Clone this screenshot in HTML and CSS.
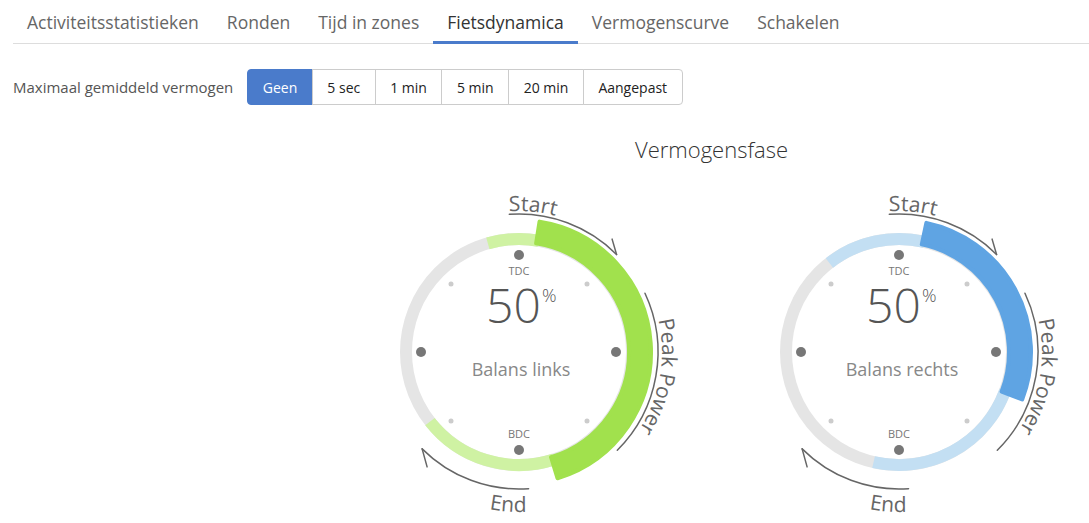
FILE: index.html
```html
<!DOCTYPE html>
<html lang="nl">
<head>
<meta charset="utf-8">
<title>Fietsdynamica</title>
<link rel="stylesheet" href="styles.css">
</head>
<body>
<nav class="tabs">
  <a class="tab">Activiteitsstatistieken</a>
  <a class="tab">Ronden</a>
  <a class="tab">Tijd in zones</a>
  <a class="tab active">Fietsdynamica</a>
  <a class="tab">Vermogenscurve</a>
  <a class="tab">Schakelen</a>
</nav>

<div class="filter">
  <span class="filter-label">Maximaal gemiddeld vermogen</span>
  <div class="btn-group">
    <button class="btn active">Geen</button>
    <button class="btn">5 sec</button>
    <button class="btn">1 min</button>
    <button class="btn">5 min</button>
    <button class="btn">20 min</button>
    <button class="btn">Aangepast</button>
  </div>
</div>

<section class="phase">
  <h2 class="phase-title">Vermogensfase</h2>
  <div class="gauges">
    <svg class="gauge" viewBox="0 0 380 360" width="380" height="360">
      <defs>
        <path id="startL" d="M 100.31 68.20 A 141 141 0 0 1 298.80 87.31"/>
        <path id="peakL" d="M 307.14 94.98 A 143 143 0 0 1 272.02 294.14"/>
        <path id="endL" d="M 69.25 281.98 A 160 160 0 0 0 294.98 297.75"/>
      </defs>
      <circle class="ring-base" cx="190" cy="177" r="113"/>
      <path class="ring-light green-light" d="M 158.85 68.38 A 113 113 0 0 1 209.62 65.72"/>
      <path class="ring-light green-light" d="M 224.92 284.47 A 113 113 0 0 1 100.96 246.57"/>
      <path class="ring-main green" d="M 210.54 46.61 A 132 132 0 0 1 228.48 303.27 L 222.07 282.23 A 110 110 0 0 0 207.12 68.34 Z"/>

      <circle class="dot" cx="190" cy="80" r="5"/>
      <circle class="dot" cx="190" cy="275" r="5"/>
      <circle class="dot" cx="92" cy="177" r="5"/>
      <circle class="dot" cx="287" cy="177" r="5"/>
      <circle class="dot-small" cx="122" cy="109" r="2.5"/>
      <circle class="dot-small" cx="258" cy="109" r="2.5"/>
      <circle class="dot-small" cx="122" cy="246" r="2.5"/>
      <circle class="dot-small" cx="258" cy="246" r="2.5"/>

      <text class="g-label" x="190" y="100">TDC</text>
      <text class="g-label" x="190" y="263">BDC</text>
      <text class="g-num" x="184.5" y="148">50</text>
      <text class="g-pct" x="213" y="127">%</text>
      <text class="g-name" x="192" y="201">Balans links</text>

      <path class="ann-line" d="M 180.37 39.33 A 138 138 0 0 1 287.58 79.42"/>
      <path class="ann-line" d="M 283.1 64.1 L 287.58 79.42"/>
      <path class="ann-line" d="M 315.98 118.26 A 139 139 0 0 1 288.29 275.29"/>
      <path class="ann-line" d="M 199.56 313.67 A 137 137 0 0 1 93.13 273.87"/>
      <path class="ann-line" d="M 93.13 273.87 L 98.1 291.9"/>
      <text class="ann-text"><textPath href="#startL" startOffset="50%">Start</textPath></text>
      <text class="ann-text"><textPath href="#peakL" startOffset="50%">Peak Power</textPath></text>
      <text class="ann-text"><textPath href="#endL" startOffset="50%">End</textPath></text>
    </svg>

    <svg class="gauge" viewBox="0 0 380 360" width="380" height="360">
      <defs>
        <path id="startR" d="M 100.31 68.20 A 141 141 0 0 1 298.80 87.31"/>
        <path id="peakR" d="M 307.14 94.98 A 143 143 0 0 1 272.02 294.14"/>
        <path id="endR" d="M 69.25 281.98 A 160 160 0 0 0 294.98 297.75"/>
      </defs>
      <circle class="ring-base" cx="190" cy="177" r="113"/>
      <path class="ring-light blue-light" d="M 120.43 87.96 A 113 113 0 0 1 215.42 66.90"/>
      <path class="ring-light blue-light" d="M 296.18 215.65 A 113 113 0 0 1 164.58 287.10"/>
      <path class="ring-main blue" d="M 217.34 47.86 A 132 132 0 0 1 313.20 224.41 L 292.66 216.51 A 110 110 0 0 0 212.78 69.39 Z"/>

      <circle class="dot" cx="190" cy="80" r="5"/>
      <circle class="dot" cx="190" cy="275" r="5"/>
      <circle class="dot" cx="92" cy="177" r="5"/>
      <circle class="dot" cx="287" cy="177" r="5"/>
      <circle class="dot-small" cx="122" cy="109" r="2.5"/>
      <circle class="dot-small" cx="258" cy="109" r="2.5"/>
      <circle class="dot-small" cx="122" cy="246" r="2.5"/>
      <circle class="dot-small" cx="258" cy="246" r="2.5"/>

      <text class="g-label" x="190" y="100">TDC</text>
      <text class="g-label" x="190" y="263">BDC</text>
      <text class="g-num" x="184.5" y="148">50</text>
      <text class="g-pct" x="213" y="127">%</text>
      <text class="g-name" x="193" y="201">Balans rechts</text>

      <path class="ann-line" d="M 180.37 39.33 A 138 138 0 0 1 287.58 79.42"/>
      <path class="ann-line" d="M 283.1 64.1 L 287.58 79.42"/>
      <path class="ann-line" d="M 315.98 118.26 A 139 139 0 0 1 288.29 275.29"/>
      <path class="ann-line" d="M 199.56 313.67 A 137 137 0 0 1 93.13 273.87"/>
      <path class="ann-line" d="M 93.13 273.87 L 98.1 291.9"/>
      <text class="ann-text"><textPath href="#startR" startOffset="50%">Start</textPath></text>
      <text class="ann-text"><textPath href="#peakR" startOffset="50%">Peak Power</textPath></text>
      <text class="ann-text"><textPath href="#endR" startOffset="50%">End</textPath></text>
    </svg>
  </div>
</section>
</body>
</html>
```

FILE: styles.css
```css
html, body {
  margin: 0;
  padding: 0;
  width: 1089px;
  height: 523px;
  overflow: hidden;
  background: #fff;
  font-family: "Open Sans", "Noto Sans", "Liberation Sans", sans-serif;
}

.tabs {
  display: flex;
  margin-left: 13px;
  height: 43px;
  border-bottom: 1px solid #dddddd;
}

.tab {
  box-sizing: border-box;
  height: 43px;
  display: flex;
  align-items: flex-end;
  padding: 0 14px 9.5px;
  font-size: 17.5px;
  color: #666666;
  cursor: pointer;
  white-space: nowrap;
}

.tab.active {
  height: 44px;
  margin-bottom: -1px;
  padding-bottom: 7.5px;
  border-bottom: 3px solid #4a7bcb;
  color: #333333;
}

.filter {
  display: flex;
  align-items: center;
  margin: 25px 0 0 13px;
  gap: 14px;
}

.filter-label {
  font-size: 15px;
  color: #555555;
}

.btn-group {
  display: flex;
}

.btn {
  height: 36px;
  padding: 0 14.5px;
  margin: 0 0 0 -1px;
  border: 1px solid #cccccc;
  background: #ffffff;
  font-family: "Open Sans", "Noto Sans", "Liberation Sans", sans-serif;
  font-size: 14px;
  color: #222222;
  border-radius: 0;
}

.btn:first-child {
  margin-left: 0;
  border-radius: 4px 0 0 4px;
}

.btn:last-child {
  border-radius: 0 4px 4px 0;
}

.btn.active {
  background: #4a7bcb;
  border-color: #4a7bcb;
  color: #ffffff;
}

.phase {
  margin-left: 329px;
  width: 760px;
}

.phase-title {
  margin: 29px 0 11px;
  padding-left: 5px;
  height: 30px;
  line-height: 30px;
  text-align: center;
  font-size: 22px;
  font-weight: 300;
  color: #333333;
}

.gauges {
  display: flex;
}

.gauge {
  display: block;
  flex: none;
  overflow: visible;
}

.ring-base {
  fill: none;
  stroke: #e5e5e5;
  stroke-width: 12;
}

.ring-light {
  fill: none;
  stroke-width: 12;
}

.green-light { stroke: #cff2a3; }
.blue-light { stroke: #c3dff3; }

.ring-main {
  stroke-width: 4;
  stroke-linejoin: round;
}

.green { fill: #a1e14d; stroke: #a1e14d; }
.blue { fill: #5fa4e3; stroke: #5fa4e3; }

.dot { fill: #777777; }
.dot-small { fill: #cccccc; }

.gauge text {
  font-family: "Open Sans", "Noto Sans", "Liberation Sans", sans-serif;
}

.g-label {
  font-size: 11px;
  fill: #777777;
  text-anchor: middle;
}

.g-num {
  font-size: 48px;
  font-weight: 300;
  fill: #555555;
  text-anchor: middle;
}

.g-pct {
  font-size: 18px;
  font-weight: 300;
  fill: #555555;
}

.g-name {
  font-size: 18px;
  fill: #888888;
  text-anchor: middle;
}

.ann-line {
  fill: none;
  stroke: #666666;
  stroke-width: 1.5;
  stroke-linecap: round;
}

.ann-text {
  font-size: 21px;
  fill: #666666;
  text-anchor: middle;
}
```
